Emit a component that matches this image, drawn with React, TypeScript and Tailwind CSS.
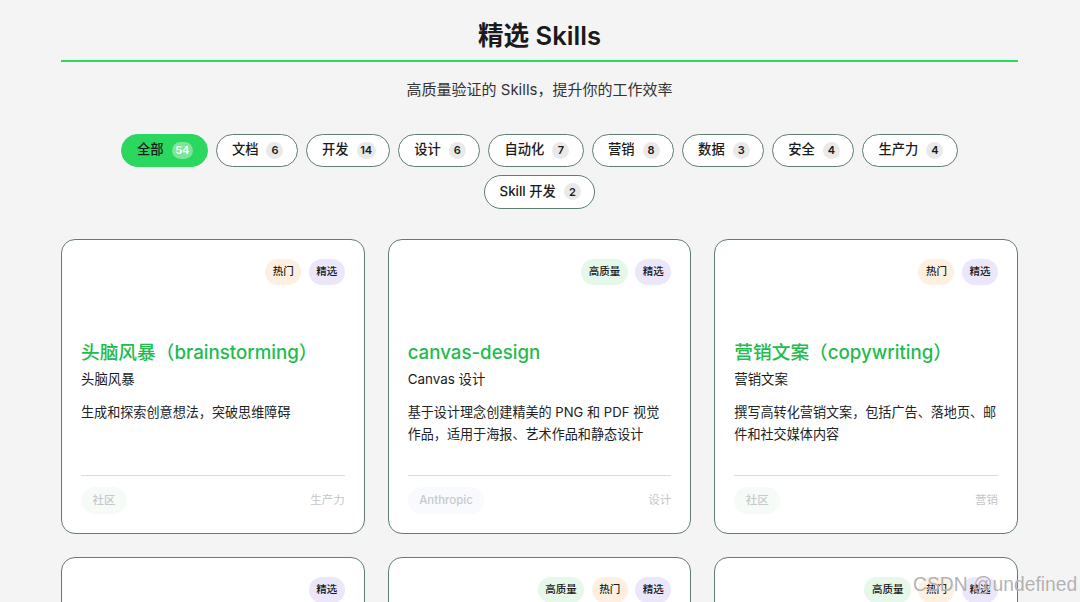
import React from "react";

const FONT = "font-['Inter','Noto_Sans_CJK_SC',sans-serif]";

const filters = [
  { label: "全部", count: 54, active: true },
  { label: "文档", count: 6 },
  { label: "开发", count: 14 },
  { label: "设计", count: 6 },
  { label: "自动化", count: 7 },
  { label: "营销", count: 8 },
  { label: "数据", count: 3 },
  { label: "安全", count: 4 },
  { label: "生产力", count: 4 },
  { label: "Skill 开发", count: 2 },
];

const tagStyles: Record<string, string> = {
  高质量: "bg-[#e6f8ea]",
  热门: "bg-[#fdf0e1]",
  精选: "bg-[#ece6fb]",
};

interface Card {
  tags: string[];
  title?: string;
  subtitle?: string;
  desc?: string;
  source?: string;
  category?: string;
  anthropic?: boolean;
}

const cards: Card[] = [
  {
    tags: ["热门", "精选"],
    title: "头脑风暴（brainstorming）",
    subtitle: "头脑风暴",
    desc: "生成和探索创意想法，突破思维障碍",
    source: "社区",
    category: "生产力",
  },
  {
    tags: ["高质量", "精选"],
    title: "canvas-design",
    subtitle: "Canvas 设计",
    desc: "基于设计理念创建精美的 PNG 和 PDF 视觉作品，适用于海报、艺术作品和静态设计",
    source: "Anthropic",
    category: "设计",
    anthropic: true,
  },
  {
    tags: ["热门", "精选"],
    title: "营销文案（copywriting）",
    subtitle: "营销文案",
    desc: "撰写高转化营销文案，包括广告、落地页、邮件和社交媒体内容",
    source: "社区",
    category: "营销",
  },
  { tags: ["精选"] },
  { tags: ["高质量", "热门", "精选"] },
  { tags: ["高质量", "热门", "精选"] },
];

const SkillCard: React.FC<{ card: Card }> = ({ card }) => (
  <div className="flex h-[294.5px] flex-col rounded-[14px] border border-[#5f7d72] bg-white px-[19px] pt-[19px]">
    <div className="flex justify-end gap-[7.5px]">
      {card.tags.map((t) => (
        <span
          key={t}
          className={`flex h-[26px] items-center rounded-full px-[7.5px] text-[10.5px] font-medium text-[#1a1a1a] ${tagStyles[t]}`}
        >
          {t}
        </span>
      ))}
    </div>
    {card.title && (
      <>
        <h3 className="mt-[54px] text-[18.7px] leading-[28px] font-medium whitespace-nowrap text-[#22bb4d]">
          {card.title}
        </h3>
        <p className="mt-[2px] text-[13.4px] leading-[20px] text-[#1a1a1a]">{card.subtitle}</p>
        <p className="mt-[13px] h-[43px] text-[13.1px] leading-[21.5px] text-[#222]">{card.desc}</p>
        <div className="mt-[29.5px] flex items-center justify-between border-t border-[#d5dcd9] pt-[11.5px]">
          <span
            className={`flex h-[27px] items-center rounded-full px-[11.5px] text-[11.5px] font-medium text-[#c6c9cb] ${
              card.anthropic ? "bg-[#f9fafd]" : "bg-[#f6fbf7]"
            }`}
          >
            {card.source}
          </span>
          <span className="text-[11.5px] text-[#c4c6c6]">{card.category}</span>
        </div>
      </>
    )}
  </div>
);

export default function App() {
  return (
    <div className={`relative h-[602px] overflow-hidden bg-[#f4f4f4] ${FONT}`}>
      <div className="pt-[17px] pr-[62px] pl-[61px]">
        <h1 className="text-center text-[25.6px] leading-[38px] font-semibold text-[#1a1a1a]">精选 Skills</h1>
        <div className="mt-[5px] h-[2px] bg-[#2ad75f]" />
        <p className="mt-[18px] text-center text-[15px] leading-[20px] text-[#333]">
          高质量验证的 Skills，提升你的工作效率
        </p>
        <div className="mt-[33.5px] flex flex-wrap justify-center gap-[8px] px-[40px]">
          {filters.map((f) => (
            <button
              key={f.label}
              className={`flex h-[33.5px] items-center gap-[8px] rounded-full border pl-[15px] text-[13.3px] font-medium text-[#1a1a1a] ${
                f.active ? "border-[#2ad75f] bg-[#2ad75f] pr-[14px]" : "border-[#5f7d72] bg-white pr-[13.6px]"
              }`}
            >
              {f.label}
              <span
                className={`flex h-[17px] min-w-[17px] items-center justify-center rounded-full px-[3.5px] text-[11px] font-semibold ${
                  f.active ? "bg-[#7be79b] text-white" : "bg-[#e9e9e9] text-[#1a1a1a]"
                }`}
              >
                {f.count}
              </span>
            </button>
          ))}
        </div>
        <div className="mt-[30.5px] grid grid-cols-3 gap-x-[23px] gap-y-[23.5px]">
          {cards.map((c, i) => (
            <SkillCard key={i} card={c} />
          ))}
        </div>
      </div>
      <span className="absolute top-[571px] left-[913px] font-['Liberation_Sans',sans-serif] text-[19.3px] leading-[28px] whitespace-nowrap text-[#8f8f8f]/70 [text-shadow:0_0_1px_#fff]">
        CSDN @undefined
      </span>
    </div>
  );
}
